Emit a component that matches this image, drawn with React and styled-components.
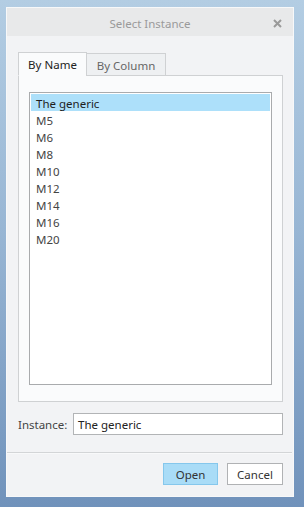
import React from "react";
import styled, { createGlobalStyle } from "styled-components";

const Global = createGlobalStyle`
  html, body { margin: 0; padding: 0; }
  body {
    width: 304px;
    height: 507px;
    overflow: hidden;
    background: linear-gradient(180deg, #b3cde3 0%, #98b6d4 45%, #7092bb 100%);
    font-family: "Noto Sans", "Open Sans", sans-serif;
  }
`;

const Page = styled.div`
  padding: 7px 10px 0 6px;
`;

const Dialog = styled.div`
  width: 288px;
  height: 490px;
  box-sizing: border-box;
  background: #f2f3f5;
  border: 1px solid #f7f8f9;
  display: flex;
  flex-direction: column;
`;

const TitleBar = styled.div`
  height: 28px;
  padding-top: 2px;
  box-sizing: border-box;
  background: #e8e9ea;
  display: flex;
  align-items: center;
  justify-content: center;
  position: relative;
`;

const Title = styled.span`
  font-size: 11.5px;
  color: #9a9a9a;
`;

const Close = styled.svg`
  position: absolute;
  right: 11px;
  top: 11px;
`;

const Body = styled.div`
  padding: 17px 10px 0 11px;
  display: flex;
  flex-direction: column;
`;

const Tabs = styled.div`
  display: flex;
  align-items: flex-end;
  height: 23px;
  margin-bottom: -1px;
  position: relative;
  z-index: 1;
`;

const Tab = styled.div`
  box-sizing: border-box;
  height: ${(p) => (p.$active ? "24px" : "23px")};
  display: flex;
  align-items: center;
  justify-content: center;
  white-space: nowrap;
  padding-top: ${(p) => (p.$active ? "0" : "1px")};
  font-size: 11.5px;
  color: ${(p) => (p.$active ? "#222" : "#666")};
  background: ${(p) => (p.$active ? "#fafbfc" : "#eef0f2")};
  border: 1px solid #cfd1d3;
  border-bottom: ${(p) => (p.$active ? "1px solid #fafbfc" : "1px solid #cfd1d3")};
  margin-left: ${(p) => (p.$active ? "0" : "-1px")};
  width: ${(p) => p.$w}px;
`;

const Panel = styled.div`
  box-sizing: border-box;
  height: 327px;
  background: #fafbfc;
  border: 1px solid #cfd1d3;
  padding: 16px 10px 16px 10px;
`;

const List = styled.div`
  box-sizing: border-box;
  height: 293px;
  background: #fff;
  border: 1px solid #a9abad;
  padding: 1px;
  display: flex;
  flex-direction: column;
`;

const Item = styled.div`
  height: 17px;
  line-height: 19px;
  padding-left: 5px;
  font-size: 11.5px;
  color: ${(p) => (p.$selected ? "#1e1e1e" : "#444")};
  background: ${(p) => (p.$selected ? "#ade0fa" : "transparent")};
`;

const InstanceRow = styled.div`
  margin-top: 11px;
  display: flex;
  align-items: center;
  height: 22px;
`;

const Label = styled.span`
  width: 55px;
  font-size: 11.5px;
  color: #444;
`;

const Input = styled.div`
  box-sizing: border-box;
  flex: 1;
  height: 22px;
  background: #fff;
  border: 1px solid #b2b4b6;
  padding-left: 4px;
  display: flex;
  align-items: center;
  font-size: 11.5px;
  color: #222;
`;

const Separator = styled.div`
  margin: 17px 1px 0 0;
  height: 1px;
  background: #d3d5d7;
  border-bottom: 1px solid #f8f9fa;
`;

const Buttons = styled.div`
  display: flex;
  justify-content: flex-end;
  gap: 9px;
  padding: 9px 10px 0 0;
`;

const Button = styled.div`
  box-sizing: border-box;
  width: ${(p) => p.$w}px;
  height: 22px;
  display: flex;
  align-items: center;
  justify-content: center;
  font-size: 11.5px;
  color: #333;
  background: ${(p) => (p.$primary ? "#a9dcf7" : "#fff")};
  border: 1px solid ${(p) => (p.$primary ? "#85c7ec" : "#b0b2b4")};
`;

const items = ["The generic", "M5", "M6", "M8", "M10", "M12", "M14", "M16", "M20"];

export default function App() {
  return (
    <>
      <Global />
      <Page>
        <Dialog>
          <TitleBar>
            <Title>Select Instance</Title>
            <Close width="9" height="9" viewBox="0 0 9 9">
              <path d="M1 1 L8 8 M8 1 L1 8" stroke="#9a9a9a" strokeWidth="2" />
            </Close>
          </TitleBar>
          <Body>
            <Tabs>
              <Tab $active $w={69}>By Name</Tab>
              <Tab $w={80}>By Column</Tab>
            </Tabs>
            <Panel>
              <List>
                {items.map((t, i) => (
                  <Item key={t} $selected={i === 0}>{t}</Item>
                ))}
              </List>
            </Panel>
            <InstanceRow>
              <Label>Instance:</Label>
              <Input>The generic</Input>
            </InstanceRow>
          </Body>
          <Separator />
          <Buttons>
            <Button $primary $w={55}>Open</Button>
            <Button $w={56}>Cancel</Button>
          </Buttons>
        </Dialog>
      </Page>
    </>
  );
}
